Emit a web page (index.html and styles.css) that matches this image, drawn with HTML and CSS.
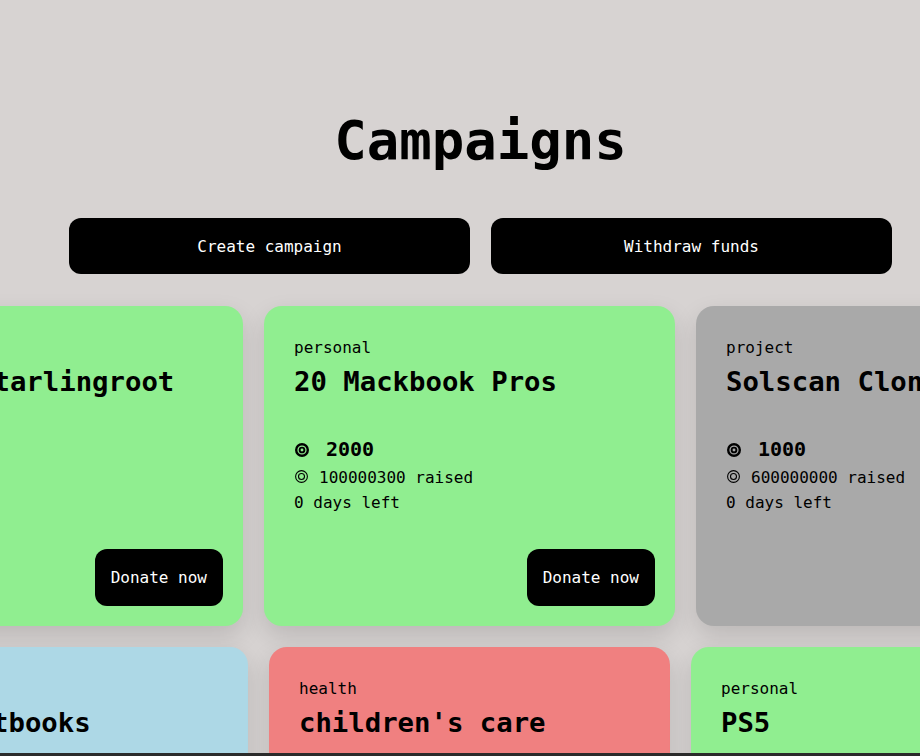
FILE: index.html
```html
<!DOCTYPE html>
<html lang="en">
<head>
<meta charset="utf-8">
<title>Campaigns</title>
<link rel="stylesheet" href="styles.css">
</head>
<body>
<div class="page">
  <header class="header">
    <h1 class="title">Campaigns</h1>
    <div class="actions">
      <button class="action">Create campaign</button>
      <button class="action">Withdraw funds</button>
    </div>
  </header>

  <section class="row row-first">
    <article class="card green">
      <div class="cat">project</div>
      <h2 class="name">Fund a Starlingroot</h2>
      <div class="price"><svg class="sol-big" viewBox="0 0 14 14" aria-label="SOL"><circle cx="7" cy="7" r="5.8" fill="none" stroke="#000" stroke-width="2.4"/><circle cx="7" cy="7" r="2.4" fill="none" stroke="#000" stroke-width="1.9"/></svg>5</div>
      <div class="meta"><svg class="sol-small" viewBox="0 0 13 13" aria-label="SOL"><circle cx="6.5" cy="6.5" r="5.9" fill="none" stroke="#000" stroke-width="1.1"/><circle cx="6.5" cy="6.5" r="3" fill="none" stroke="#000" stroke-width="1.1"/></svg>0 raised</div>
      <div class="meta">0 days</div>
      <button class="donate">Donate now</button>
    </article>
    <article class="card green">
      <div class="cat">personal</div>
      <h2 class="name">20 Mackbook Pros</h2>
      <div class="price"><svg class="sol-big" viewBox="0 0 14 14" aria-label="SOL"><circle cx="7" cy="7" r="5.8" fill="none" stroke="#000" stroke-width="2.4"/><circle cx="7" cy="7" r="2.4" fill="none" stroke="#000" stroke-width="1.9"/></svg>2000</div>
      <div class="meta"><svg class="sol-small" viewBox="0 0 13 13" aria-label="SOL"><circle cx="6.5" cy="6.5" r="5.9" fill="none" stroke="#000" stroke-width="1.1"/><circle cx="6.5" cy="6.5" r="3" fill="none" stroke="#000" stroke-width="1.1"/></svg>100000300 raised</div>
      <div class="meta">0 days left</div>
      <button class="donate">Donate now</button>
    </article>
    <article class="card gray">
      <div class="cat">project</div>
      <h2 class="name">Solscan Clone</h2>
      <div class="price"><svg class="sol-big" viewBox="0 0 14 14" aria-label="SOL"><circle cx="7" cy="7" r="5.8" fill="none" stroke="#000" stroke-width="2.4"/><circle cx="7" cy="7" r="2.4" fill="none" stroke="#000" stroke-width="1.9"/></svg>1000</div>
      <div class="meta"><svg class="sol-small" viewBox="0 0 13 13" aria-label="SOL"><circle cx="6.5" cy="6.5" r="5.9" fill="none" stroke="#000" stroke-width="1.1"/><circle cx="6.5" cy="6.5" r="3" fill="none" stroke="#000" stroke-width="1.1"/></svg>600000000 raised</div>
      <div class="meta">0 days left</div>
    </article>
  </section>

  <section class="row row-second">
    <article class="card blue">
      <div class="cat">education</div>
      <h2 class="name">Buy textbooks</h2>
    </article>
    <article class="card coral">
      <div class="cat">health</div>
      <h2 class="name">children's care</h2>
    </article>
    <article class="card green">
      <div class="cat">personal</div>
      <h2 class="name">PS5</h2>
    </article>
  </section>
</div>
<div class="bottom-edge"></div>
</body>
</html>
```

FILE: styles.css
```css
html, body {
  margin: 0;
  padding: 0;
}

body {
  background: #d7d3d2;
  font-family: "DejaVu Sans Mono", "Liberation Mono", monospace;
  color: #000;
  overflow: hidden;
  height: 756px;
}

.page {
  width: 920px;
}

.header {
  width: 823px;
  margin-left: 69px;
  padding-top: 114px;
}

.title {
  margin: 0 0 50px;
  font-size: 54px;
  line-height: 54px;
  font-weight: bold;
  text-align: center;
}

.actions {
  display: flex;
  gap: 21px;
}

.action {
  flex: 1;
  height: 56px;
  border: none;
  border-radius: 12px;
  background: #000;
  color: #fff;
  font-family: inherit;
  font-size: 16px;
  cursor: pointer;
}

.row {
  display: flex;
  gap: 21px;
}

.row-first {
  margin: 32px 0 0 -168px;
}

.row-first .card {
  width: 411px;
  height: 320px;
}

.row-second {
  margin: 21px 0 0 -153px;
}

.row-second .card {
  width: 401px;
  height: 312px;
}

.card {
  flex: none;
  box-sizing: border-box;
  display: flex;
  flex-direction: column;
  padding: 30px 20px 20px 30px;
  border-radius: 18px;
  box-shadow: 0 10px 24px rgba(0, 0, 0, 0.13);
}

.green { background: #90ee90; }
.gray { background: #a9a9a9; }
.blue { background: #add8e6; }
.coral { background: #f08080; }

.cat {
  font-size: 16px;
  line-height: 24px;
}

.name {
  margin: 4px 0 0;
  font-size: 27.3px;
  line-height: 36px;
  font-weight: bold;
  white-space: nowrap;
}

.price {
  margin-top: 35px;
  font-size: 20px;
  line-height: 28px;
  font-weight: bold;
}

.meta {
  font-size: 16px;
  line-height: 25px;
}

.price + .meta {
  margin-top: 2px;
}

.sol-big {
  width: 14px;
  height: 14px;
  margin: 0 17px 0 1px;
  vertical-align: -1px;
}

.sol-small {
  width: 13px;
  height: 13px;
  margin: 0 11px 0 1px;
  vertical-align: 0;
}

.donate {
  margin-top: auto;
  align-self: flex-end;
  height: 57px;
  padding: 0 16px;
  border: none;
  border-radius: 12px;
  background: #000;
  color: #fff;
  font-family: inherit;
  font-size: 16px;
  cursor: pointer;
}

.bottom-edge {
  position: fixed;
  left: 0;
  right: 0;
  bottom: 0;
  height: 3px;
  background: #2b2b2b;
}
```
